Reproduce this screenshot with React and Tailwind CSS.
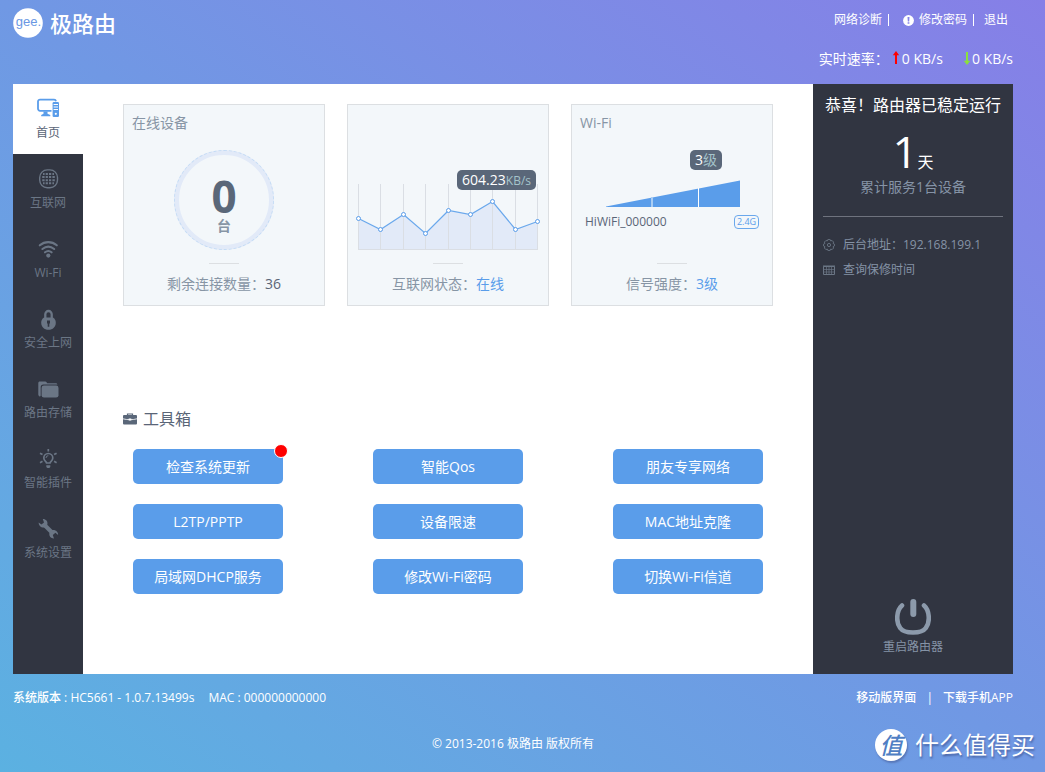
const navItems = [
    { label: "首页", icon: HomeIcon },
    { label: "互联网", icon: GlobeIcon },
    { label: "Wi-Fi", icon: WifiIcon },
    { label: "安全上网", icon: LockIcon },
    { label: "路由存储", icon: FolderIcon },
    { label: "智能插件", icon: BulbIcon },
    { label: "系统设置", icon: WrenchIcon },
];

const tools = [
    { label: "检查系统更新", hasUpdate: true },
    { label: "智能Qos" },
    { label: "朋友专享网络" },
    { label: "L2TP/PPTP" },
    { label: "设备限速" },
    { label: "MAC地址克隆" },
    { label: "局域网DHCP服务" },
    { label: "修改Wi-Fi密码" },
    { label: "切换Wi-Fi信道" },
];

const traffic = [
    [10.5, 38.5],
    [32.5, 49.5],
    [55.5, 34.5],
    [77.5, 53.5],
    [100.5, 30.5],
    [122.5, 34.5],
    [144.5, 21.5],
    [167.5, 49.5],
    [189.5, 41.5],
];

function HomeIcon() {
    return (
        <svg className="w-6 h-6" viewBox="0 0 24 24" fill="none" aria-hidden="true">
            <path d="M15.5 14.8H4a2 2 0 0 1-2-2V5.600a2 2 0 0 1 2-2h14a2 2 0 0 1 2 1.600" stroke="currentColor" strokeWidth="1.8" />
            <path d="M7.5 15.5h4v2.2l2.8 1.2v1.3H5.2v-1.3l2.3-1.2z" fill="currentColor" />
            <rect x="16.6" y="6" width="6.4" height="15" rx="1.2" fill="currentColor" />
            <path d="M17.6 8.5h4.4M17.6 11h4.4M17.6 13.5h4.4" stroke="#fff" strokeWidth="1" />
            <circle cx="19.8" cy="17.8" r="1.1" fill="#fff" />
        </svg>
    );
}

function GlobeIcon() {
    return (
        <svg className="w-6 h-6" viewBox="0 0 24 24" fill="none" aria-hidden="true">
            <rect x="3.7" y="3.9" width="17.8" height="17.8" rx="7.6" stroke="currentColor" strokeWidth="1.4" />
            <path
                d="M7 8h1.6M9.7 8h2.2M13 8h2.2M16.4 8H18M6.2 11h2.4M9.7 11h2.2M13 11h2.2M16.4 11h2.4M6.2 14.2h2.4M9.7 14.2h2.2M13 14.2h2.2M16.4 14.2h2.4M7 17.3h1.6M9.7 17.3h2.2M13 17.3h2.2M16.4 17.3H18"
                stroke="currentColor"
                strokeWidth="2.1"
            />
        </svg>
    );
}

function WifiIcon() {
    return (
        <svg className="w-6 h-6" viewBox="0 -1 24 24" fill="none" aria-hidden="true">
            <path d="M3.8 8.3c5-4.2 12-4.2 17 0M6.4 12c3.6-2.9 8.2-2.9 11.8 0M9 15.3c2-1.6 4.6-1.6 6.6 0" stroke="currentColor" strokeWidth="2.1" strokeLinecap="round" />
            <circle cx="12.3" cy="18.6" r="2.1" fill="currentColor" />
        </svg>
    );
}

function LockIcon() {
    return (
        <svg className="w-6 h-6" viewBox="0 -2 24 24" fill="none" aria-hidden="true">
            <path d="M9.3 11.5V6.3a3.200 3.300 0 0 1 6.4 0v5.2" stroke="currentColor" strokeWidth="2.300" />
            <path d="M8 9.600h9c1.8 1.2 2.8 3 2.8 5.1 0 4-3 7.1-7.3 7.1s-7.3-3.1-7.3-7.1C5.2 12.600 6.2 10.800 8 9.600z" fill="currentColor" />
            <path d="M11 12.400h3v3h-.7v3.400h-1.600v-3.400H11z" fill="#313541" />
        </svg>
    );
}

function FolderIcon() {
    return (
        <svg className="w-6 h-6" viewBox="0 -2 24 24" fill="currentColor" aria-hidden="true">
            <path d="M3.6 18.5C2.700 18 2.3 17.3 2.3 16.3V5c0-1 .6-1.600 1.6-1.600h5.200c.8 0 1.2.4 1.6 1l.6.8h8.500c1 0 1.500.6 1.600 1.400H7.400c-1.800 0-2.700 1-2.700 2.600v8c0 .6-.3 1.200-1.100 1.300z" />
            <rect x="5.6" y="7.6" width="16.9" height="12" rx="2.4" />
        </svg>
    );
}

function BulbIcon() {
    return (
        <svg className="w-6 h-6" viewBox="0 0 24 24" fill="none" aria-hidden="true">
            <path d="M10.6 17c0-1-2.800-2.300-2.800-5a4.500 4.500 0 0 1 9 0c0 2.700-2.800 4-2.800 5z" stroke="currentColor" strokeWidth="1.7" />
            <path d="M10 12a2.300 2.300 0 0 1 2.300-2.300" stroke="currentColor" strokeWidth="1" />
            <path d="M10.300 19.300h4v1.700l-1 1h-2l-1-1z" fill="currentColor" />
            <path d="M12.300 3v2.600M4 7.200l2.500 1.400M20.600 7.200l-2.500 1.400M4 16.700l2.500-1.400M20.600 16.700l-2.500-1.400" stroke="currentColor" strokeWidth="1.700" />
        </svg>
    );
}

function WrenchIcon() {
    return (
        <svg className="w-6 h-6" viewBox="0 0 24 24" fill="none" aria-hidden="true">
            <path d="M8 8.5l9 9" stroke="currentColor" strokeWidth="4" />
            <path
                d="M6.800 3c3-.1 5.200 2.200 4.600 5.400L8.600 11.400C5.200 12 2.500 9.600 2.700 6.400l2.700 2.200L8 6.400zM18 22.400c-3 .1-5.200-2.200-4.600-5.400l2.800-3c3.400-.6 6.100 1.800 5.900 5l-2.700-2.200-2.600 2.200z"
                fill="currentColor"
            />
        </svg>
    );
}

function Arrow({ className }) {
    return (
        <svg className={className} viewBox="0 0 8 14" aria-hidden="true">
            <path d="M4 0L7.2 4.200H5v8.800H3V4.200H.8z" fill="currentColor" />
        </svg>
    );
}

function Header() {
    return (
        <header className="flex justify-between h-[84px]">
            <h1 className="flex items-center gap-[7px] h-[46px] text-[22px] font-medium text-white">
                <svg className="w-[30px] h-[30px]" viewBox="0 0 30 30" aria-hidden="true">
                    <circle cx="15" cy="15" r="14.800" fill="#fff" />
                    <text x="15.500" y="18" fontSize="13" fontWeight="400" textAnchor="middle" fill="#6a97e3" fontFamily="Liberation Sans, sans-serif">gee.</text>
                </svg>
                极路由
            </h1>
            <div className="flex flex-col items-end gap-[18px] pt-2.5 text-white">
                <div className="flex items-center h-5 pr-[5px] text-[12px]">
                    <a href="#diagnose">网络诊断</a>
                    <span className="w-px h-3 ml-1.5 mr-3.5 bg-white"></span>
                    <a href="#password" className="flex items-center gap-[5px]">
                        <svg className="w-[11px] h-[11px]" viewBox="0 0 11 11" aria-hidden="true">
                            <circle cx="5.5" cy="5.5" r="5.4" fill="#fff" />
                            <path d="M4.500 2h2l-.3 4.400H4.800zM4.600 7.200h1.800v1.600H4.600z" fill="#8583e8" />
                        </svg>
                        修改密码
                    </a>
                    <span className="w-px h-3 ml-1.5 mr-2.5 bg-white"></span>
                    <a href="#logout">退出</a>
                </div>
                <div className="flex items-center h-5 text-[14px]">
                    <span>实时速率：</span>
                    <Arrow className="w-2 h-3.5 ml-[3px] mr-0.5 text-[#ff0000]" />
                    <span>0 KB/s</span>
                    <Arrow className="w-2 h-3.5 ml-5 mr-px rotate-180 text-[#8be03c]" />
                    <span>0 KB/s</span>
                </div>
            </div>
        </header>
    );
}

function Sidebar() {
    return (
        <nav className="w-[70px] shrink-0 bg-[#313541]">
            {navItems.map(({ label, icon: Icon }, i) => (
                <a
                    key={label}
                    href={"#nav-" + i}
                    className={
                        i === 0
                            ? "flex flex-col items-center gap-[5px] h-[70px] pt-3 bg-white text-[#5a9dea]"
                            : "flex flex-col items-center gap-[5px] h-[70px] pt-3 text-[#6b7685]"
                    }
                >
                    <Icon />
                    <span className={i === 0 ? "text-[12px] leading-4 text-[#5a6577]" : "text-[12px] leading-4"}>{label}</span>
                </a>
            ))}
        </nav>
    );
}

function Card({ title, footer, children }) {
    return (
        <section className="flex flex-col h-[202px] border border-[#dcdfe2] bg-[#f3f7fa] text-[14px] text-[#8795a5]">
            <h2 className="h-[45px] px-2 pt-2 leading-5">{title}</h2>
            <div className="flex flex-col flex-1">{children}</div>
            <div className="w-[30px] h-px mx-auto bg-[#dcdfe2]"></div>
            <p className="h-[41px] pt-2.5 text-center leading-5">{footer}</p>
        </section>
    );
}

function TrafficChart() {
    const line = traffic.map((p) => p.join(",")).join(" ");
    return (
        <div className="relative flex-1 pt-[30px]">
            <svg className="w-full h-[76px]" viewBox="0 0 200 76" aria-hidden="true">
                <polygon points={`10.5,69.5 ${line} 189.5,69.5`} fill="#e2eaf8" />
                {traffic.map(([x]) => (
                    <line key={x} x1={x} x2={x} y1="4" y2="69" stroke="#dadee4" />
                ))}
                <line x1="10" x2="190" y1="69.5" y2="69.5" stroke="#dadee4" />
                <polyline points={line} fill="none" stroke="#6aa8ec" strokeWidth="1.2" />
                {traffic.map(([x, y]) => (
                    <circle key={x} cx={x} cy={y} r="2" fill="#fff" stroke="#5a9dea" />
                ))}
            </svg>
            <span className="absolute top-5 right-3 h-5 px-[5px] rounded-[5px] bg-[#5a6779] font-medium text-white leading-5 whitespace-nowrap">
                604.23<span className="text-[12px] font-normal text-[#a5c4cb]">KB/s</span>
            </span>
        </div>
    );
}

function WifiSignal() {
    return (
        <>
            <span className="h-5 px-[5px] mr-[50px] self-end rounded-[5px] bg-[#5a6779] font-medium text-white leading-5">
                3<span className="font-normal text-[#a5c4cb]">级</span>
            </span>
            <svg className="w-[134px] h-[27px] mt-2.5 ml-[34px]" viewBox="0 0 134 27" aria-hidden="true">
                <polygon points="0,26.5 134,0.5 134,27 0,27" fill="#5a9dea" />
                <rect x="45" y="17" width="2" height="10" fill="#a9cdf4" />
                <rect x="92" y="8" width="1" height="19" fill="#fff" />
            </svg>
            <div className="flex items-center justify-between h-5 mt-[5px] px-[13px] text-[12px] text-[#5a6577]">
                <span>HiWiFi_000000</span>
                <span className="w-[25px] h-3.5 border border-[#6aa8ec] rounded-[4px] text-[9px] leading-3 text-center text-[#5a9dea]">2.4G</span>
            </div>
        </>
    );
}

function Toolbox() {
    return (
        <section className="mt-[101px]">
            <h2 className="flex items-center gap-1.5 h-6 text-[16px] text-[#5a6577]">
                <svg className="w-3.5 h-3.5" viewBox="0 0 14 14" aria-hidden="true">
                    <path d="M4.5 3.5V2h5v1.5" fill="none" stroke="#5a6779" strokeWidth="1.2" />
                    <rect x="0" y="3" width="14" height="9.5" rx="1" fill="#5a6779" />
                    <path d="M0 6.8c4 1.2 10 1.2 14 0" fill="none" stroke="#fff" strokeWidth=".8" />
                    <rect x="5.5" y="6.4" width="3" height="2" rx=".6" fill="#fff" />
                </svg>
                工具箱
            </h2>
            <div className="grid grid-cols-[repeat(3,150px)] justify-between gap-y-5 mt-[18px] px-2.5">
                {tools.map((tool) => (
                    <button key={tool.label} type="button" className="relative h-[35px] rounded-[5px] bg-[#5a9dea] text-[14px] text-white">
                        {tool.label}
                        {tool.hasUpdate && (
                            <span className="absolute -top-[5px] -right-[5px] w-3.5 h-3.5 rounded-full border border-white bg-[#ff0000]"></span>
                        )}
                    </button>
                ))}
            </div>
        </section>
    );
}

function StatusPanel() {
    return (
        <aside className="flex flex-col items-center w-[200px] shrink-0 px-2.5 bg-[#313541] text-[#8593a6]">
            <h2 className="mt-[9px] text-[16px] leading-6 text-white">恭喜！路由器已稳定运行</h2>
            <p className="h-[60px] text-[16px] leading-[68px] text-white">
                <span className="text-[44px]">1</span>天
            </p>
            <p className="text-[14px] leading-5">累计服务1台设备</p>
            <hr className="w-full mt-[19px] border-[#6f737e]" />
            <ul className="flex flex-col w-full mt-[18px] gap-[5px] text-[12px] leading-5">
                <li className="flex items-center gap-2">
                    <svg className="w-3 h-3" viewBox="0 0 12 12" fill="none" stroke="#6b7685" aria-hidden="true">
                        <path d="M4.800.6h2.400l.5 1.300 1.400-.4 1.500 1.600-.5 1.300 1.300.7v1.900l-1.300.7.5 1.300-1.500 1.600-1.400-.5-.5 1.300H4.800l-.5-1.300-1.400.5L1.400 9l.5-1.300L.6 7V5.100l1.300-.7-.5-1.300 1.500-1.600 1.400.4z" strokeWidth=".9" />
                        <circle cx="6" cy="6" r="1.600" strokeWidth=".9" />
                    </svg>
                    后台地址：192.168.199.1
                </li>
                <li>
                    <a href="#warranty" className="flex items-center gap-2">
                        <svg className="w-3 h-3" viewBox="0 0 12 12" fill="none" stroke="#6b7685" aria-hidden="true">
                            <path d="M.5 2.500h11v8H.5zM0 2h12" />
                            <path d="M.5 5.5h11M.5 8h11M3.5 2v8M6 2v8M8.5 2v8" strokeWidth=".7" />
                        </svg>
                        查询保修时间
                    </a>
                </li>
            </ul>
            <button type="button" className="flex flex-col items-center gap-1 mt-auto mb-[19px] text-[12px] leading-4">
                <svg className="w-9 h-9" viewBox="0 0 36 36" fill="none" stroke="#8c9aab" strokeLinecap="round" aria-hidden="true">
                    <path d="M18.3 3v12" strokeWidth="6" />
                    <path d="M7 6.500C1.200 11.500 .800 23.500 5.200 29c4.200 6 21.400 6 25.600 0C35.200 23.500 34.800 11.500 29 6.500" strokeWidth="4.600" />
                </svg>
                重启路由器
            </button>
        </aside>
    );
}

function Footer() {
    return (
        <footer className="pt-4 text-[12px] leading-4 text-white">
            <div className="flex justify-between font-medium">
                <div className="flex gap-3.5">
                    <span>系统版本 : HC5661 - 1.0.7.13499s</span>
                    <span>MAC : 000000000000</span>
                </div>
                <div className="flex gap-2.5">
                    <a href="#mobile">移动版界面</a>
                    <span>|</span>
                    <a href="#app">下载手机APP</a>
                </div>
            </div>
            <p className="mt-[30px] text-center">© 2013-2016 极路由 版权所有</p>
        </footer>
    );
}

function App() {
    return (
        <div className="relative min-h-screen pl-[13px] pr-8 bg-linear-to-tr from-[#5bb1e1] via-[#7098e4] to-[#867fe7] font-['Open_Sans','Noto_Sans_CJK_SC',sans-serif]">
            <Header />
            <div className="flex min-h-[590px]">
                <Sidebar />
                <main className="flex-1 px-10 py-5 bg-white">
                    <div className="grid grid-cols-3 gap-[22px]">
                        <Card title="在线设备" footer={<>剩余连接数量：<span className="text-[#5a6577]">36</span></>}>
                            <div className="flex flex-col items-center w-[100px] h-[100px] mx-auto pt-[19px] rounded-full border-5 border-[#e2eaf8] outline outline-dashed -outline-offset-1 outline-[#c5dcf5] font-bold">
                                <span className="text-[44px] leading-[44px] text-[#5a6779]">0</span>
                                <span className="leading-4">台</span>
                            </div>
                        </Card>
                        <Card footer={<>互联网状态：<a href="#status" className="text-[#5a9dea]">在线</a></>}>
                            <TrafficChart />
                        </Card>
                        <Card title="Wi-Fi" footer={<>信号强度：<span className="text-[#5a9dea]">3级</span></>}>
                            <WifiSignal />
                        </Card>
                    </div>
                    <Toolbox />
                </main>
                <StatusPanel />
            </div>
            <Footer />
            <div className="absolute right-2.5 bottom-[11px] flex items-center gap-2 text-[24px] leading-8 text-white [text-shadow:1px_2px_2px_#4a66a8]">
                <span className="w-8 h-8 rounded-full bg-white shadow-[1px_2px_2px_#5877b8] text-[23px] font-medium italic text-center text-[#4f7fc4] [text-shadow:none]">值</span>
                什么值得买
            </div>
        </div>
    );
}

export default App;
